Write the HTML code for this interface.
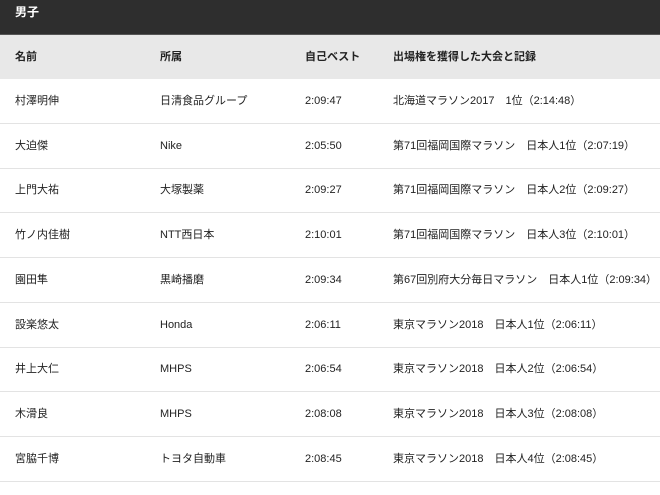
<!DOCTYPE html>
<html><head><style>
body{margin:0;width:660px;height:495px;overflow:hidden;background:#fff;font-family:"Liberation Sans","Noto Sans CJK JP",sans-serif;font-size:11px;color:#222}
.top{height:34px;background:#2e2e2e;color:#fff;font-weight:bold;line-height:25px;padding-left:15px;border-bottom:1px solid #555;font-size:12px}
table{border-collapse:collapse;width:660px;table-layout:fixed;font-size:11px}
td,th{padding:0;text-align:left;height:43.75px;line-height:14px;border-bottom:1px solid #e3e3e3;white-space:nowrap;overflow:hidden;vertical-align:middle}
th{background:#e8e8e8;font-weight:bold;height:44px;border:none}
col.a{width:160px}col.b{width:145px}col.c{width:88px}
td:nth-child(1),th:nth-child(1){padding-left:15px}
</style></head><body>
<div class="top">男子</div>
<table><colgroup><col class="a"><col class="b"><col class="c"><col></colgroup>
<tr><th>名前</th><th>所属</th><th>自己ベスト</th><th>出場権を獲得した大会と記録</th></tr>
<tr><td>村澤明伸</td><td>日清食品グループ</td><td>2:09:47</td><td>北海道マラソン2017　1位（2:14:48）</td></tr>
<tr><td>大迫傑</td><td>Nike</td><td>2:05:50</td><td>第71回福岡国際マラソン　日本人1位（2:07:19）</td></tr>
<tr><td>上門大祐</td><td>大塚製薬</td><td>2:09:27</td><td>第71回福岡国際マラソン　日本人2位（2:09:27）</td></tr>
<tr><td>竹ノ内佳樹</td><td>NTT西日本</td><td>2:10:01</td><td>第71回福岡国際マラソン　日本人3位（2:10:01）</td></tr>
<tr><td>園田隼</td><td>黒崎播磨</td><td>2:09:34</td><td>第67回別府大分毎日マラソン　日本人1位（2:09:34）</td></tr>
<tr><td>設楽悠太</td><td>Honda</td><td>2:06:11</td><td>東京マラソン2018　日本人1位（2:06:11）</td></tr>
<tr><td>井上大仁</td><td>MHPS</td><td>2:06:54</td><td>東京マラソン2018　日本人2位（2:06:54）</td></tr>
<tr><td>木滑良</td><td>MHPS</td><td>2:08:08</td><td>東京マラソン2018　日本人3位（2:08:08）</td></tr>
<tr><td>宮脇千博</td><td>トヨタ自動車</td><td>2:08:45</td><td>東京マラソン2018　日本人4位（2:08:45）</td></tr>
</table>
</body></html>
